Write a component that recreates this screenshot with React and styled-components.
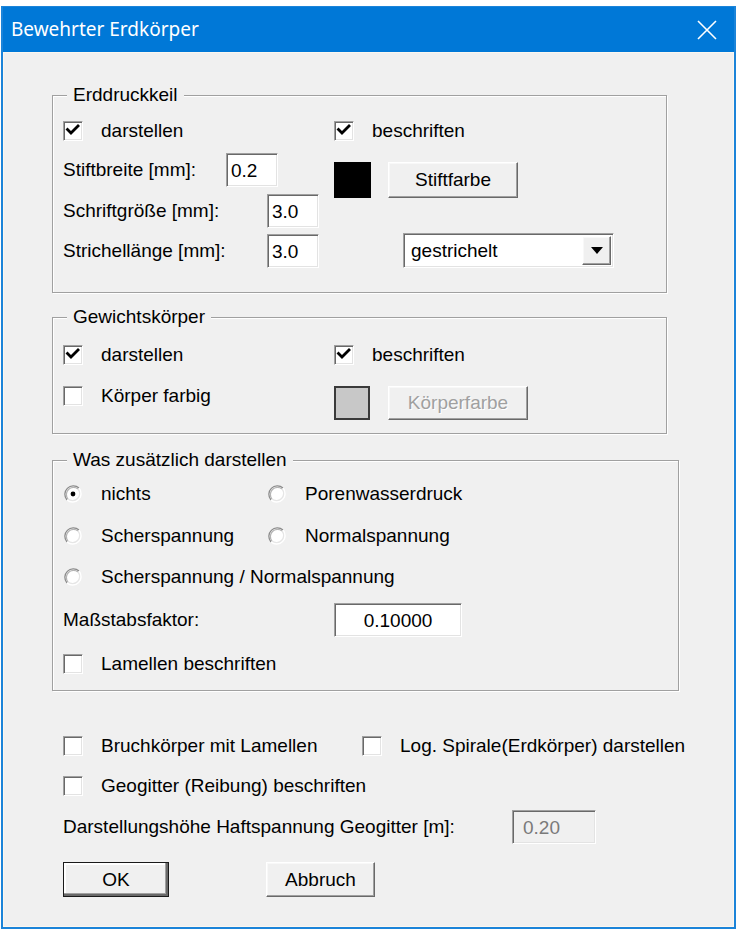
import React from "react";
import styled, { createGlobalStyle, css } from "styled-components";

const GlobalStyle = createGlobalStyle`
  html, body { margin: 0; padding: 0; background: #ffffff; }
  body { font-family: "Liberation Sans", Arial, sans-serif; }
  * { box-sizing: border-box; }
`;

const sunken = css`
  border: 1px solid;
  border-color: #a0a0a0 #ffffff #ffffff #a0a0a0;
  box-shadow: inset 1px 1px 0 #696969, inset -1px -1px 0 #e3e3e3;
`;

const raised = css`
  border: 1px solid;
  border-color: #ffffff #696969 #696969 #ffffff;
  box-shadow: inset -1px -1px 0 #a0a0a0, inset 1px 1px 0 #f8f8f8;
`;

const Window = styled.div`
  margin: 6px 0 0 1px;
  width: 735px;
  height: 923px;
  background: #0078d7;
  border: solid #1c84d9;
  border-width: 1px 2px 2px 2px;
  display: flex;
  flex-direction: column;
`;

const TitleBar = styled.div`
  height: 45px;
  flex: none;
  display: flex;
  align-items: center;
  justify-content: space-between;
  padding: 0 17px 0 8px;
  color: #ffffff;
  font-family: "Noto Sans", "Open Sans", sans-serif;
  font-size: 19px;
`;

const TitleText = styled.span`
  position: relative;
  top: -1px;
`;

const Body = styled.div`
  flex: 1;
  background: #f0f0f0;
  border: 1px solid #fbf7f0;
  padding: 42px 0 0 48px;
  font-size: 19px;
  color: #000000;
  line-height: 1.15;
`;

const Group = styled.div`
  position: relative;
  width: ${(p) => p.$w}px;
  height: ${(p) => p.$h}px;
  margin-top: ${(p) => p.$mt || 0}px;
  border: 1px solid #a0a0a0;
  box-shadow: inset 1px 1px 0 #ffffff, 1px 1px 0 #ffffff;
  padding: ${(p) => p.$pt}px 0 0 10px;
`;

const Legend = styled.span`
  position: absolute;
  top: -12px;
  left: 14px;
  padding: 0 6px;
  background: #f0f0f0;
  line-height: 22px;
`;

const Columns = styled.div`
  display: flex;
`;

const Col = styled.div`
  display: flex;
  flex-direction: column;
  width: ${(p) => (p.$w ? `${p.$w}px` : "auto")};
`;

const Row = styled.div`
  display: flex;
  align-items: center;
  height: ${(p) => p.$h || 24}px;
  margin-top: ${(p) => p.$mt || 0}px;
`;

const Cell = styled.div`
  display: flex;
  align-items: center;
  width: ${(p) => (p.$w ? `${p.$w}px` : "auto")};
  flex: none;
`;

const Label = styled.span`
  width: ${(p) => (p.$w ? `${p.$w}px` : "auto")};
  flex: none;
  white-space: nowrap;
`;

const BoxWrap = styled.span`
  ${sunken};
  width: 20px;
  height: 20px;
  flex: none;
  background: #ffffff;
  display: inline-flex;
  align-items: center;
  justify-content: center;
  margin-right: 18px;
`;

const Input = styled.div`
  ${sunken};
  width: ${(p) => p.$w}px;
  height: ${(p) => p.$h || 34}px;
  background: ${(p) => (p.$disabled ? "#f0f0f0" : "#ffffff")};
  color: ${(p) => (p.$disabled ? "#7a7a7a" : "#000")};
  display: flex;
  align-items: center;
  justify-content: ${(p) => (p.$center ? "center" : "flex-start")};
  padding: 2px ${(p) => p.$pl ?? 4}px 0;
  white-space: nowrap;
`;

const Swatch = styled.div`
  width: ${(p) => p.$w}px;
  height: ${(p) => p.$h}px;
  background: ${(p) => p.$color};
  border: 2px solid ${(p) => p.$edge};
  flex: none;
`;

const Button = styled.div`
  ${raised};
  width: ${(p) => p.$w}px;
  height: ${(p) => p.$h || 36}px;
  margin-left: ${(p) => p.$ml || 0}px;
  background: #f0f0f0;
  display: flex;
  align-items: center;
  justify-content: center;
  color: ${(p) => (p.$disabled ? "#a0a0a0" : "#000")};
  text-shadow: ${(p) => (p.$disabled ? "1px 1px 0 #ffffff" : "none")};
  flex: none;
  ${(p) =>
    p.$default &&
    css`
      outline: 1px solid #1a1a1a;
      outline-offset: -1px;
      box-shadow: inset -2px -2px 0 #696969, inset -3px -3px 0 #a0a0a0,
        inset 2px 2px 0 #ffffff;
    `}
`;

const Select = styled.div`
  ${sunken};
  width: 211px;
  height: 35px;
  margin-left: 69px;
  background: #ffffff;
  display: flex;
  align-items: center;
  padding: 2px 2px 2px 7px;
`;

const SelectText = styled.span`
  flex: 1;
`;

const SelectButton = styled.div`
  ${raised};
  width: 29px;
  height: 29px;
  background: #f0f0f0;
  display: flex;
  align-items: center;
  justify-content: center;
`;

const ButtonRow = styled.div`
  display: flex;
  align-items: center;
  margin-top: ${(p) => p.$mt || 0}px;
  gap: 97px;
`;

const Bottom = styled.div`
  margin-left: 11px;
  margin-top: 43px;
`;

const Check = ({ checked }) => (
  <BoxWrap>
    {checked && (
      <svg width="16" height="16" viewBox="0 0 16 16">
        <path d="M2.5 6.5 L6 10 L13 3" stroke="#000" strokeWidth="2.8" fill="none" strokeLinecap="square" />
      </svg>
    )}
  </BoxWrap>
);

const RadioWrap = styled.span`
  width: 20px;
  height: 20px;
  flex: none;
  display: inline-flex;
  margin-right: 18px;
`;

const Radio = ({ checked }) => (
  <RadioWrap>
    <svg width="20" height="20" viewBox="0 0 20 20">
      <circle cx="10" cy="10" r="8" fill="#ffffff" />
      <path d="M4.0 16.0 A8.5 8.5 0 0 1 16.0 4.0" stroke="#8a8a8a" strokeWidth="1.3" fill="none" />
      <path d="M5.0 15.0 A7.1 7.1 0 0 1 15.0 5.0" stroke="#b4b4b4" strokeWidth="1.3" fill="none" />
      <path d="M16.0 4.0 A8.5 8.5 0 0 1 4.0 16.0" stroke="#ffffff" strokeWidth="1.3" fill="none" />
      <path d="M15.0 5.0 A7.1 7.1 0 0 1 5.0 15.0" stroke="#e6e6e6" strokeWidth="1.3" fill="none" />
      {checked && <circle cx="10" cy="10" r="2.4" fill="#000" />}
    </svg>
  </RadioWrap>
);

const CheckItem = ({ checked, children, w }) => (
  <Cell $w={w}>
    <Check checked={checked} />
    <Label>{children}</Label>
  </Cell>
);

const RadioItem = ({ checked, children, w }) => (
  <Cell $w={w}>
    <Radio checked={checked} />
    <Label>{children}</Label>
  </Cell>
);

const Arrow = () => (
  <svg width="12" height="7" viewBox="0 0 12 7">
    <path d="M0 0 H12 L6 7 Z" fill="#000" />
  </svg>
);

const CloseIcon = () => (
  <svg width="20" height="20" viewBox="0 0 20 20">
    <path d="M1 1 L19 19 M19 1 L1 19" stroke="#ffffff" strokeWidth="1.6" />
  </svg>
);

export default function App() {
  return (
    <>
      <GlobalStyle />
      <Window>
        <TitleBar>
          <TitleText>Bewehrter Erdkörper</TitleText>
          <CloseIcon />
        </TitleBar>
        <Body>
          <Group $w={615} $h={198} $pt={23}>
            <Legend>Erddruckkeil</Legend>
            <Columns>
              <Col $w={271}>
                <Row>
                  <CheckItem checked>darstellen</CheckItem>
                </Row>
                <Row $h={34} $mt={10}>
                  <Label $w={163}>Stiftbreite [mm]:</Label>
                  <Input $w={52}>0.2</Input>
                </Row>
                <Row $h={34} $mt={7}>
                  <Label $w={204}>Schriftgröße [mm]:</Label>
                  <Input $w={52}>3.0</Input>
                </Row>
                <Row $h={34} $mt={6}>
                  <Label $w={204}>Strichellänge [mm]:</Label>
                  <Input $w={52}>3.0</Input>
                </Row>
              </Col>
              <Col>
                <Row>
                  <CheckItem checked>beschriften</CheckItem>
                </Row>
                <Row $h={36} $mt={19}>
                  <Swatch $w={37} $h={36} $color="#000000" $edge="#000000" />
                  <Button $w={130} $ml={17}>Stiftfarbe</Button>
                </Row>
                <Row $h={35} $mt={35}>
                  <Select>
                    <SelectText>gestrichelt</SelectText>
                    <SelectButton>
                      <Arrow />
                    </SelectButton>
                  </Select>
                </Row>
              </Col>
            </Columns>
          </Group>

          <Group $w={615} $h={117} $pt={25} $mt={24}>
            <Legend>Gewichtskörper</Legend>
            <Columns>
              <Col $w={271}>
                <Row>
                  <CheckItem checked>darstellen</CheckItem>
                </Row>
                <Row $mt={17}>
                  <CheckItem>Körper farbig</CheckItem>
                </Row>
              </Col>
              <Col>
                <Row>
                  <CheckItem checked>beschriften</CheckItem>
                </Row>
                <Row $h={34} $mt={19}>
                  <Swatch $w={36} $h={34} $color="#c8c8c8" $edge="#3a3a3a" />
                  <Button $w={140} $h={34} $ml={18} $disabled>
                    Körperfarbe
                  </Button>
                </Row>
              </Col>
            </Columns>
          </Group>

          <Group $w={627} $h={231} $pt={21} $mt={26}>
            <Legend>Was zusätzlich darstellen</Legend>
            <Row>
              <RadioItem checked w={204}>nichts</RadioItem>
              <RadioItem>Porenwasserdruck</RadioItem>
            </Row>
            <Row $mt={18}>
              <RadioItem w={204}>Scherspannung</RadioItem>
              <RadioItem>Normalspannung</RadioItem>
            </Row>
            <Row $mt={17}>
              <RadioItem>Scherspannung / Normalspannung</RadioItem>
            </Row>
            <Row $h={34} $mt={14}>
              <Label $w={271}>Maßstabsfaktor:</Label>
              <Input $w={128} $center>0.10000</Input>
            </Row>
            <Row $mt={15}>
              <CheckItem>Lamellen beschriften</CheckItem>
            </Row>
          </Group>

          <Bottom>
            <Row>
              <CheckItem w={299}>Bruchkörper mit Lamellen</CheckItem>
              <CheckItem>Log. Spirale(Erdkörper) darstellen</CheckItem>
            </Row>
            <Row $mt={16}>
              <CheckItem>Geogitter (Reibung) beschriften</CheckItem>
            </Row>
            <Row $h={34} $mt={12}>
              <Label $w={449}>Darstellungshöhe Haftspannung Geogitter [m]:</Label>
              <Input $w={84} $disabled $pl={10}>0.20</Input>
            </Row>
            <ButtonRow $mt={18}>
              <Button $w={106} $h={35} $default>OK</Button>
              <Button $w={109} $h={35}>Abbruch</Button>
            </ButtonRow>
          </Bottom>
        </Body>
      </Window>
    </>
  );
}
